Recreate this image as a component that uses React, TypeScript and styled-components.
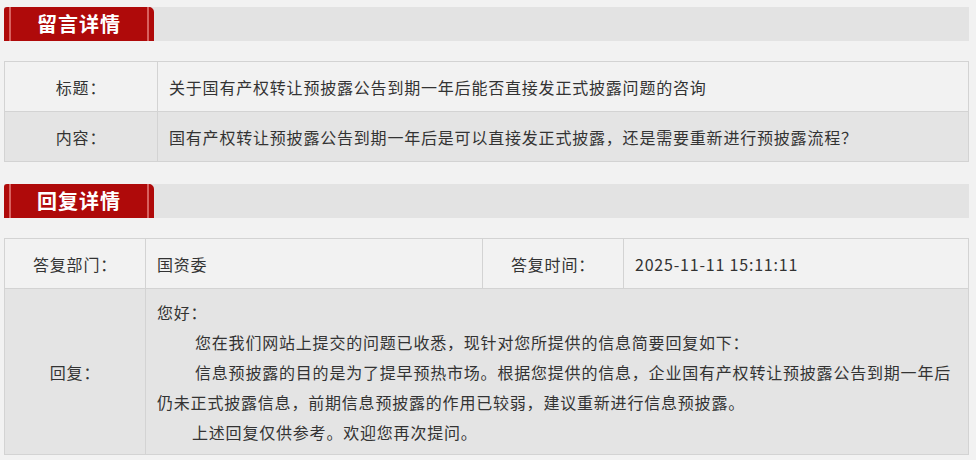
import styled, { createGlobalStyle } from "styled-components";

const GlobalStyle = createGlobalStyle`
  html, body {
    margin: 0;
    padding: 0;
    background: #f2f2f2;
  }
  body {
    font-family: "Microsoft YaHei", "Noto Sans CJK SC", "Noto Sans", sans-serif;
    color: #333;
  }
`;

const StyledPage = styled.main`
  width: 965px;
  padding: 7px 0 0 4px;
`;

const StyledSection = styled.section`
  margin-bottom: 22px;
`;

const StyledBar = styled.div`
  height: 34px;
  background: #e3e3e3;
  display: flex;
  margin-bottom: 20px;
`;

const StyledTab = styled.h2`
  margin: 0;
  width: 150px;
  height: 34px;
  border-radius: 3px 5px 0 0;
  background: linear-gradient(
    to right,
    #af0a0a 0 5px,
    #d8615f 5px 7px,
    #af0a0a 7px 143px,
    #d8615f 143px 145px,
    #af0a0a 145px
  );
  color: #fff;
  font-size: 20px;
  font-weight: bold;
  letter-spacing: 1px;
  line-height: 34px;
  text-align: center;
`;

const StyledTable = styled.table`
  width: 965px;
  border-collapse: collapse;
  table-layout: fixed;
  font-size: 16px;
  letter-spacing: 0.8px;
`;

const StyledRow = styled.tr<{ $shade?: boolean }>`
  background: ${(p) => (p.$shade ? "#e4e4e4" : "#f2f2f2")};
`;

const StyledLabel = styled.td`
  border: 1px solid #d3d3d3;
  height: 49px;
  text-align: center;
  padding: 0;
`;

const StyledValue = styled.td`
  border: 1px solid #d3d3d3;
  height: 49px;
  padding: 0 8px 0 11px;
`;

const StyledReply = styled.td`
  border: 1px solid #d3d3d3;
  padding: 8px 8px 7px 11px;
  line-height: 30px;
`;

const StyledLine = styled.p<{ $indent?: number }>`
  margin: 0;
  text-indent: ${(p) => p.$indent ?? 0}px;
`;

function App() {
  return (
    <StyledPage>
      <GlobalStyle />
      <StyledSection>
        <StyledBar>
          <StyledTab>留言详情</StyledTab>
        </StyledBar>
        <StyledTable>
          <colgroup>
            <col style={{ width: 153 }} />
            <col />
          </colgroup>
          <tbody>
            <StyledRow>
              <StyledLabel>标题：</StyledLabel>
              <StyledValue>
                关于国有产权转让预披露公告到期一年后能否直接发正式披露问题的咨询
              </StyledValue>
            </StyledRow>
            <StyledRow $shade>
              <StyledLabel>内容：</StyledLabel>
              <StyledValue>
                国有产权转让预披露公告到期一年后是可以直接发正式披露，还是需要重新进行预披露流程？
              </StyledValue>
            </StyledRow>
          </tbody>
        </StyledTable>
      </StyledSection>
      <StyledSection>
        <StyledBar>
          <StyledTab>回复详情</StyledTab>
        </StyledBar>
        <StyledTable>
          <colgroup>
            <col style={{ width: 141 }} />
            <col style={{ width: 337 }} />
            <col style={{ width: 141 }} />
            <col />
          </colgroup>
          <tbody>
            <StyledRow>
              <StyledLabel>答复部门：</StyledLabel>
              <StyledValue>国资委</StyledValue>
              <StyledLabel>答复时间：</StyledLabel>
              <StyledValue>2025-11-11 15:11:11</StyledValue>
            </StyledRow>
            <StyledRow $shade>
              <StyledLabel>回复：</StyledLabel>
              <StyledReply colSpan={3}>
                <StyledLine>您好：</StyledLine>
                <StyledLine $indent={38}>
                  您在我们网站上提交的问题已收悉，现针对您所提供的信息简要回复如下：
                </StyledLine>
                <StyledLine $indent={38}>
                  信息预披露的目的是为了提早预热市场。根据您提供的信息，企业国有产权转让预披露公告到期一年后仍未正式披露信息，前期信息预披露的作用已较弱，建议重新进行信息预披露。
                </StyledLine>
                <StyledLine $indent={35}>上述回复仅供参考。欢迎您再次提问。</StyledLine>
              </StyledReply>
            </StyledRow>
          </tbody>
        </StyledTable>
      </StyledSection>
    </StyledPage>
  );
}

export default App;
